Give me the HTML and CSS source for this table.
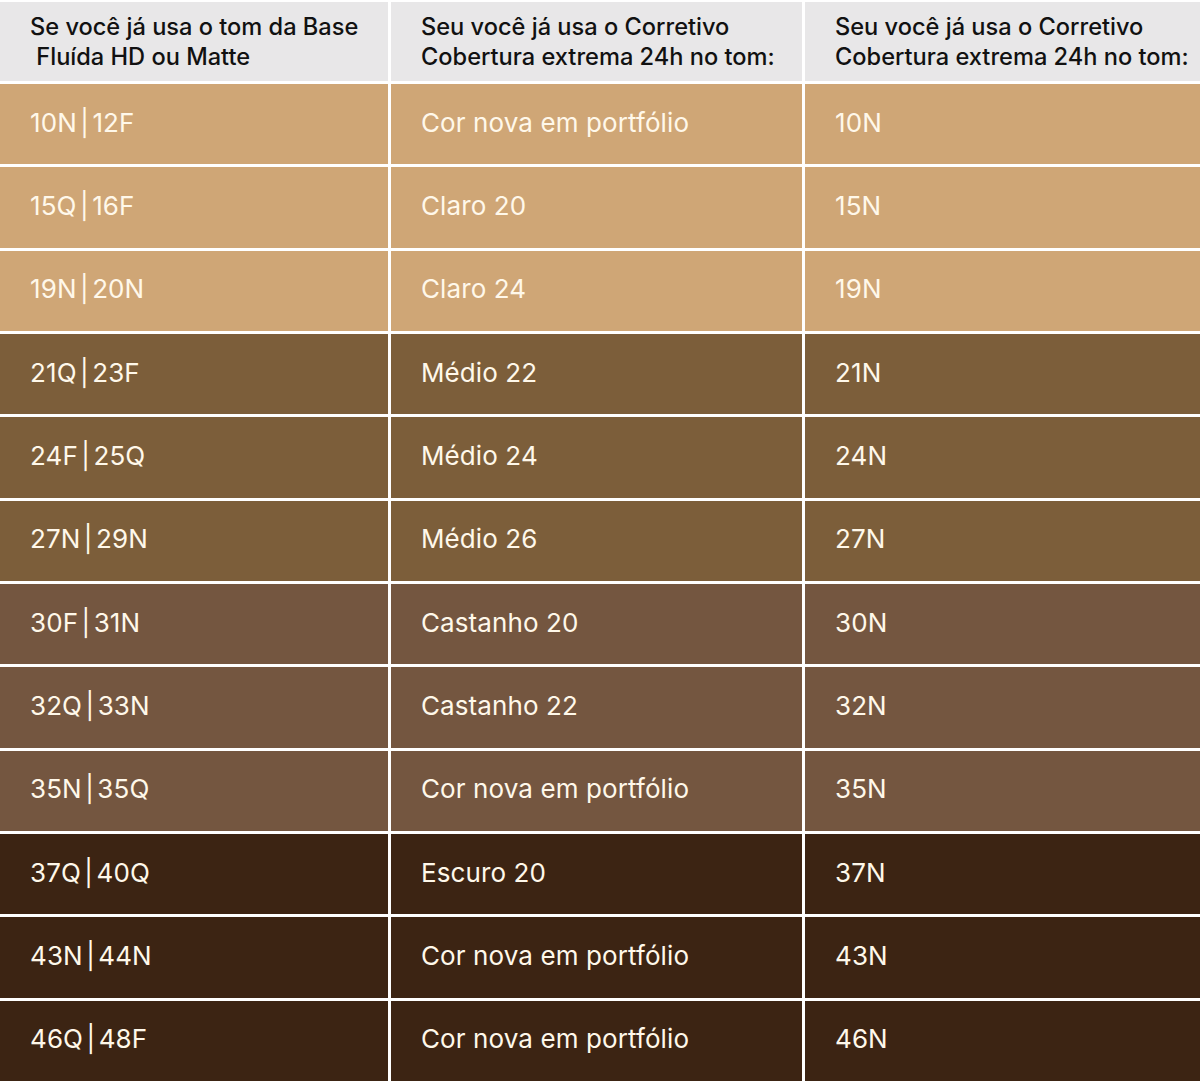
FILE: index.html
```html
<!DOCTYPE html>
<html lang="pt-BR">
<head>
<meta charset="utf-8">
<title>Tabela de tons</title>
<link rel="stylesheet" href="styles.css">
</head>
<body>
<div class="table">
  <div class="row head">
    <div class="cell">Se você já usa o tom da Base<br>&nbsp;Fluída HD ou Matte</div>
    <div class="cell">Seu você já usa o Corretivo<br>Cobertura extrema 24h no tom:</div>
    <div class="cell">Seu você já usa o Corretivo<br>Cobertura extrema 24h no tom:</div>
  </div>
  <div class="row light"><div class="cell code">10N | 12F</div><div class="cell">Cor nova em portfólio</div><div class="cell">10N</div></div>
  <div class="row light"><div class="cell code">15Q | 16F</div><div class="cell">Claro 20</div><div class="cell">15N</div></div>
  <div class="row light"><div class="cell code">19N | 20N</div><div class="cell">Claro 24</div><div class="cell">19N</div></div>
  <div class="row medium"><div class="cell code">21Q | 23F</div><div class="cell">Médio 22</div><div class="cell">21N</div></div>
  <div class="row medium"><div class="cell code">24F | 25Q</div><div class="cell">Médio 24</div><div class="cell">24N</div></div>
  <div class="row medium"><div class="cell code">27N | 29N</div><div class="cell">Médio 26</div><div class="cell">27N</div></div>
  <div class="row tan"><div class="cell code">30F | 31N</div><div class="cell">Castanho 20</div><div class="cell">30N</div></div>
  <div class="row tan"><div class="cell code">32Q | 33N</div><div class="cell">Castanho 22</div><div class="cell">32N</div></div>
  <div class="row tan"><div class="cell code">35N | 35Q</div><div class="cell">Cor nova em portfólio</div><div class="cell">35N</div></div>
  <div class="row deep"><div class="cell code">37Q | 40Q</div><div class="cell">Escuro 20</div><div class="cell">37N</div></div>
  <div class="row deep"><div class="cell code">43N | 44N</div><div class="cell">Cor nova em portfólio</div><div class="cell">43N</div></div>
  <div class="row deep"><div class="cell code">46Q | 48F</div><div class="cell">Cor nova em portfólio</div><div class="cell">46N</div></div>
</div>
</body>
</html>
```

FILE: styles.css
```css
html, body {
  margin: 0;
  padding: 0;
  background: #ffffff;
}

.table {
  box-sizing: border-box;
  width: 1200px;
  height: 1084px;
  padding: 2px 0 3px;
  display: grid;
  grid-template-rows: 79px repeat(12, 1fr);
  row-gap: 3px;
  font-family: Inter, "Liberation Sans", Arial, sans-serif;
}

.row {
  display: grid;
  grid-template-columns: 388px 411px 1fr;
  column-gap: 3px;
  --bg: #cfa676;
}

.cell {
  background: var(--bg);
  display: flex;
  align-items: center;
  padding: 0 0 4px 30px;
  color: #fff8ea;
  font-size: 26px;
  letter-spacing: 0.1px;
  white-space: pre;
}

.code {
  word-spacing: -4px;
}

.head {
  --bg: #e8e7e8;
}

.head .cell {
  color: #111111;
  font-size: 23.6px;
  font-weight: 500;
  line-height: 30px;
  letter-spacing: 0;
  padding-bottom: 0;
  white-space: nowrap;
}

.light { --bg: #cfa676; }
.medium { --bg: #7c5e3a; }
.tan { --bg: #745640; }
.deep { --bg: #3c2413; }
```
